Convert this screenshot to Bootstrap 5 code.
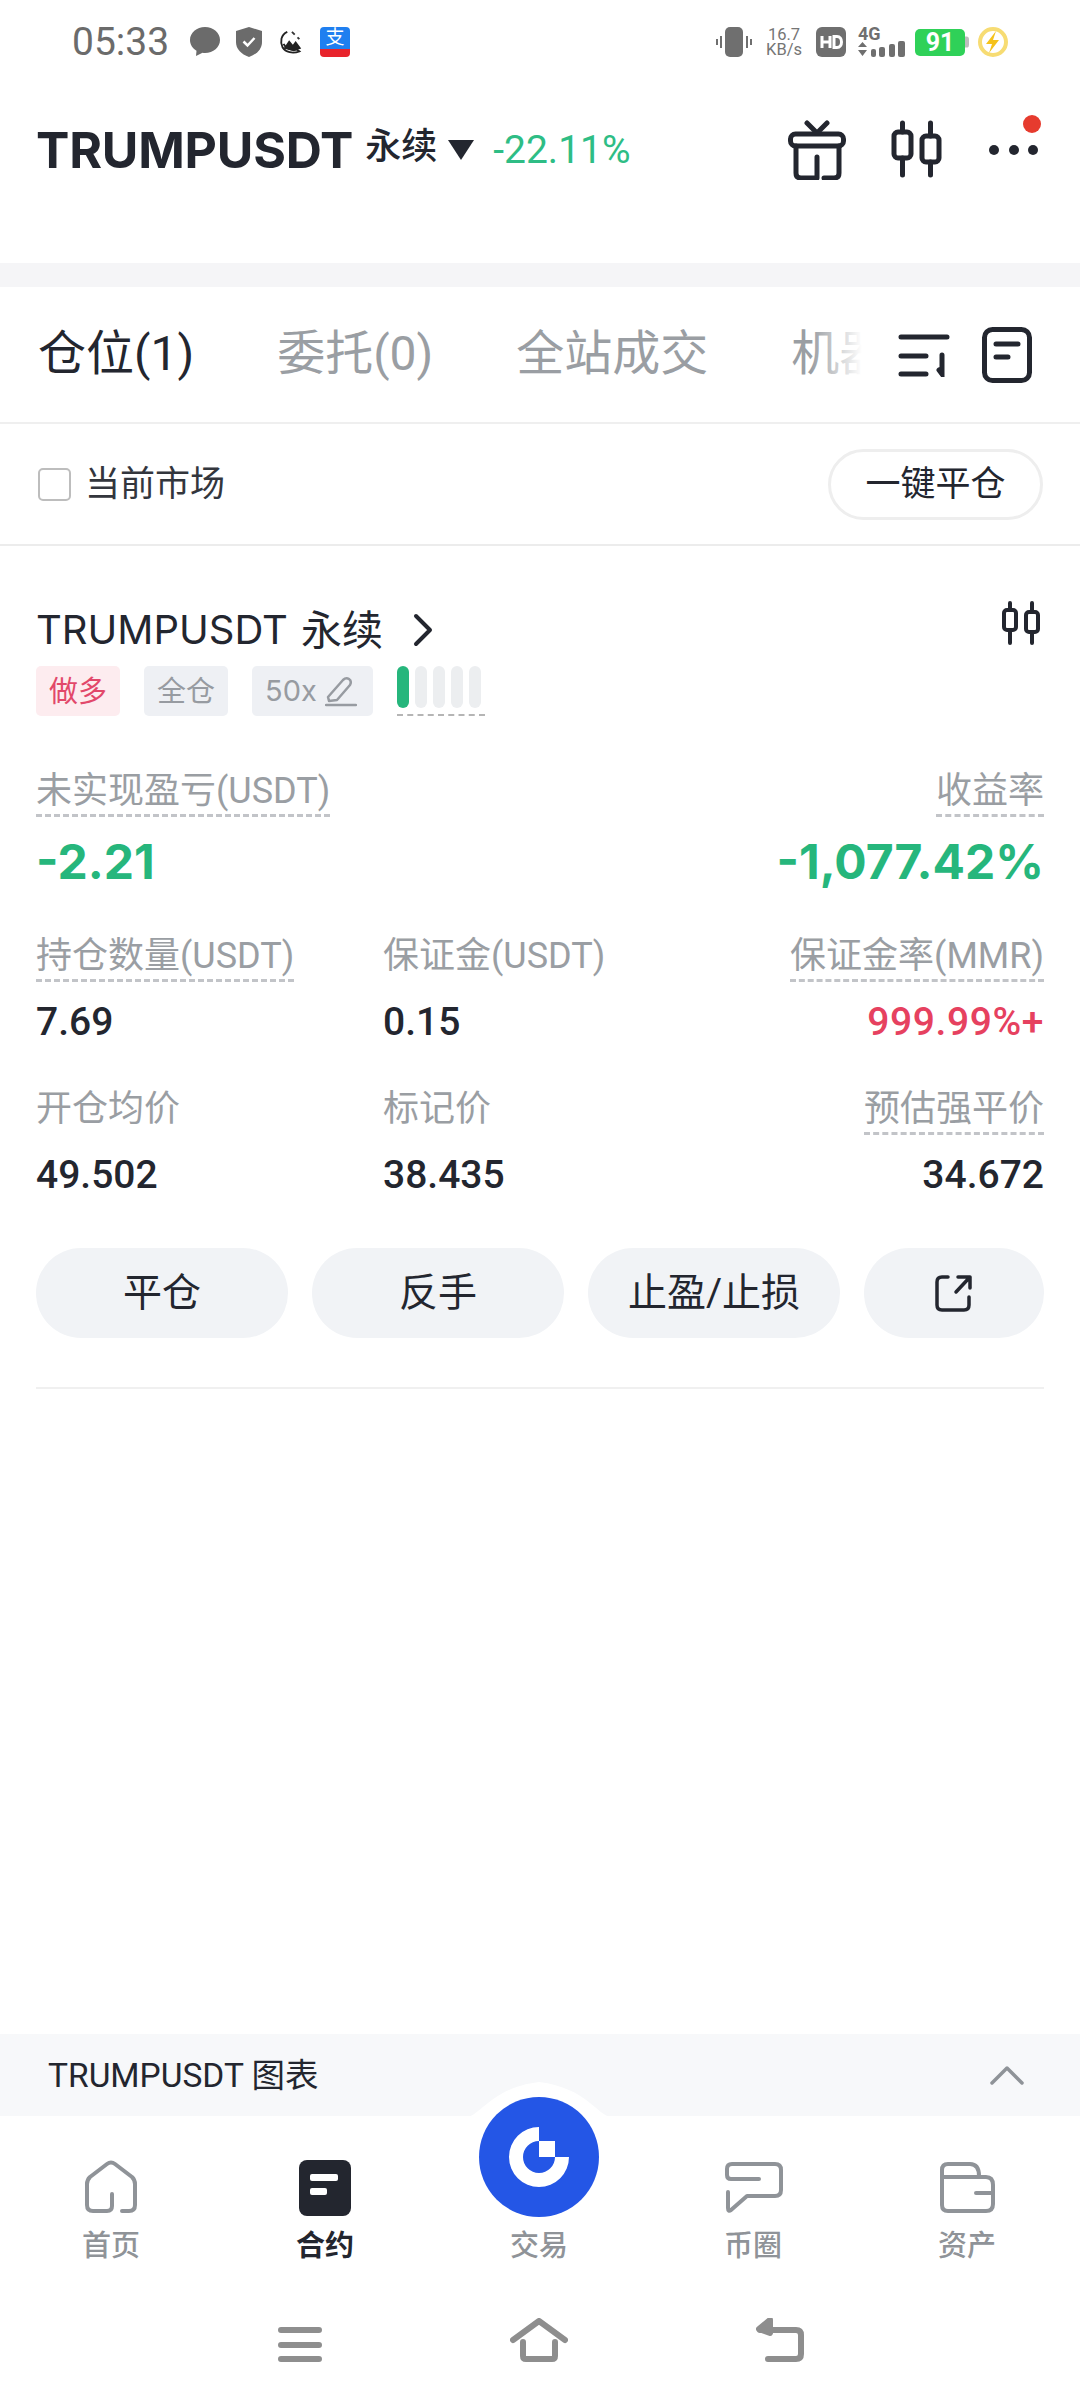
<!doctype html>
<html lang="zh">

<head>
  <meta charset="utf-8">
  <meta name="viewport" content="width=device-width, initial-scale=1">
  <title>TRUMPUSDT 仓位</title>
  <link href="https://cdn.jsdelivr.net/npm/bootstrap@5.3.5/dist/css/bootstrap.min.css" rel="stylesheet">
  <style>
    html, body { height: 100%; }
    body {
      font-family: Roboto, "Noto Sans CJK SC", sans-serif;
      color: #23262f;
      background: #fff;
      overflow: hidden;
    }
    svg { display: block; flex: none; }
    .phone { height: 2408px; }

    /* status bar */
    .status-bar { height: 87px; padding: 27px 71px 0 72px; }
    .status-time { font-size: 39px; line-height: 30px; color: #6b6b6b; margin-right: 21px; }
    .status-speed { font-size: 16.5px; line-height: 15px; color: #757575; text-align: center; margin: 0 14px 0 14px; }
    .status-4g { font-size: 18px; font-weight: 700; line-height: 14px; color: #6f6f6f; margin: 0 0 0 12px; }
    .status-batt { width: 50px; height: 27px; background: #2fd158; border-radius: 5px; color: #fff; font-size: 25px; font-weight: 700; line-height: 27px; text-align: center; margin-left: 10px; }
    .alipay { width: 30px; height: 30px; border-radius: 4px; overflow: hidden; }
    .alipay-top { height: 22px; background: #1f7ff0; color: #fff; font-size: 19px; line-height: 22px; text-align: center; }
    .alipay-low { height: 8px; background: #e8242c; }

    /* header */
    .head-bar { height: 176px; padding: 0 36px 50px; }
    .pair-name { font-family: Inter, sans-serif; font-size: 50px; font-weight: 700; line-height: 60px; letter-spacing: -.2px; margin-right: 12px; }
    .pair-kind { font-size: 36px; font-weight: 500; line-height: 50px; margin-bottom: 6px; margin-right: 11px; }
    .pair-tri { width: 0; height: 0; border-left: 13px solid transparent; border-right: 13px solid transparent; border-top: 20px solid #23262f; margin-right: 19px; }
    .pair-pct { font-size: 39px; color: #2ebd85; }
    .head-icons { gap: 44px; margin-right: -2px; }
    .dots-wrap { position: relative; width: 60px; height: 60px; margin-left: -1px; }
    .red-dot { position: absolute; width: 18px; height: 18px; border-radius: 50%; background: #e63b2e; right: 5px; top: -5px; }
    .grey-band { height: 24px; background: #f5f5f7; }

    /* tabs */
    .tab-row { height: 137px; border-bottom: 2px solid #efefef; padding: 0 48px 0 38px; }
    .tab-scroll { width: 833px; overflow: hidden; position: relative; white-space: nowrap; gap: 83px; font-size: 48px; color: #9a9ea3; margin-top: -2px; }
    .tab-scroll::after { content: ""; position: absolute; top: 0; bottom: 0; right: 0; width: 60px; background: linear-gradient(90deg, rgba(255, 255, 255, 0), #fff 85%); }
    .tab-on { color: #23262f; }
    .tab-icon-gap { margin-left: 32px; }

    /* filter */
    .filter-row { height: 122px; border-bottom: 2px solid #ececec; padding: 0 37px 0 38px; }
    .fake-check { width: 33px; height: 33px; border: 2px solid #bdbdbd; border-radius: 5px; margin-right: 14px; }
    .filter-text { font-size: 35px; color: #33363d; padding-top: 3px; }
    .close-all { width: 215px; height: 71px; border: 3px solid #eeeeee; border-radius: 36px; font-size: 35px; color: #23262f; padding: 2px 0 0; background: #fff; }

    /* position card */
    .pos-card { padding: 60px 36px 0; }
    .pos-title { font-size: 40px; line-height: 48px; font-family: Inter, "Noto Sans CJK SC", sans-serif; }
    .pos-kind { font-size: 41px; margin-left: 13px; }
    .pos-title svg { margin-left: 30px; }
    .pos-candle { margin-top: -5px; margin-right: 4px; }
    .tag-row { margin-top: 12px; height: 50px; gap: 24px; }
    .tag-item { height: 50px; border-radius: 5px; font-size: 29px; line-height: 52px; padding: 0 13px; background: #eef0f4; color: #979ba1; }
    .tag-lev { padding-right: 16px; font-family: Inter, sans-serif; }
    .tag-long { background: #fdecef; color: #e2486a; }
    .lev-bars { gap: 6px; height: 50px; border-bottom: 2px dashed #b5b5b5; padding-bottom: 8px; width: 88px; align-self: flex-start; }
    .lev-bars span { width: 12px; height: 42px; border-radius: 6px; background: #eceef0; }
    .lev-bars span.lev-on { background: #26b67c; }

    .metric-grid { display: grid; grid-template-columns: 347px 1fr auto; }
    .m-label { font-size: 36px; line-height: 45px; color: #9a9ea3; padding-top: 1px; }
    .m-tip { display: inline-block; border-bottom: 3px dashed #c2c4c8; }
    .m-plain { border-bottom: 3px solid transparent; display: inline-block; }
    .m-value { font-size: 39px; line-height: 46px; margin-top: 17px; color: #23262f; font-weight: 500; }
    .m-big { font-family: Inter, sans-serif; font-size: 48px; line-height: 56px; font-weight: 700; color: #26b67c; margin-top: 17px; }
    .m-red { color: #e6415f; letter-spacing: .6px; }
    .row-one { margin-top: 52px; }
    .row-two { margin-top: 43px; }
    .row-three { margin-top: 41px; }
    .act-row { margin-top: 50px; gap: 24px; }
    .act-btn { height: 90px; width: 252px; border-radius: 45px; background: #f1f3f6; border: 0; font-size: 39px; color: #23262f; padding: 0; }
    .act-btn.act-share { width: 180px; }
    .card-end { margin-top: 49px; height: 2px; background: #f0f0f0; }

    /* chart bar and tab bar */
    .chart-bar { height: 82px; background: #f7f8fa; padding: 0 56px 0 48px; font-size: 33.5px; margin-top: auto; }
    .chart-label { padding-top: 3px; }
    .tab-bar { position: relative; height: 292px; background: #fff; }
    .bump { position: absolute; left: 464px; top: -34px; }
    .trade-btn { position: absolute; left: 479px; top: -19px; }
    .nav-list { padding: 44px 4px 0; }
    .nav-item-x { width: 214px; font-size: 29px; line-height: 40px; color: #8f9398; font-weight: 500; }
    .nav-item-x svg { height: 56px; margin-bottom: 10px; }
    .nav-on { color: #23262f; font-weight: 700; }
    .sys-bar { position: absolute; left: 0; right: 0; top: 202px; padding: 0 0 0 278px; gap: 188px; }
  </style>
</head>

<body>
  <div class="phone d-flex flex-column">

    <div class="status-bar d-flex justify-content-between align-items-start">
      <div class="d-flex align-items-center">
        <span class="status-time">05:33</span>
        <svg width="30" height="30" viewBox="0 0 30 30"><path d="M15 0C6.700 0 0 5.800 0 13c0 4.500 2.600 8.400 6.500 10.700L6 29l6.500-3.300c.8.200 1.700.300 2.500.300 8.300 0 15-5.800 15-13S23.300 0 15 0z" fill="#6b6b6b"/></svg>
        <svg class="ms-3" width="26" height="30" viewBox="0 0 26 30"><path d="M13 0l13 4v11c0 7-5 12-13 15C5 27 0 22 0 15V4z" fill="#6b6b6b"/><path d="M7.500 14.500l4 4 7-7.500" fill="none" stroke="#fff" stroke-width="2.500"/></svg>
        <svg class="ms-3 me-3" width="26" height="28" viewBox="0 0 28 28"><path d="M10 3C3 6 2 14 5 20c3 5 11 7 18 4l-3-2c-6 1-12-1-14-6" fill="none" stroke="#222" stroke-width="2"/><path d="M6 21l6-9 4 5 3-4 6 8-8 3z" fill="#222"/><path d="M15 3l3 3M21 9l2 2" stroke="#333" stroke-width="2"/></svg>
        <div class="alipay">
          <div class="alipay-top">支</div>
          <div class="alipay-low"></div>
        </div>
      </div>
      <div class="d-flex align-items-center">
        <svg width="36" height="30" viewBox="0 0 36 30"><rect x="9" width="18" height="30" rx="5" fill="#6f6f6f"/><path d="M5 9v12M1 12v6M31 9v12M35 12v6" stroke="#6f6f6f" stroke-width="2"/></svg>
        <div class="status-speed">16.7<br>KB/s</div>
        <svg width="30" height="30" viewBox="0 0 30 30"><rect width="30" height="30" rx="6" fill="#6f6f6f"/><path d="M6 9v12M14 9v12M6 15h8" stroke="#fff" stroke-width="3"/><path d="M18 9.500h3c6 0 6 11 0 11h-3z" fill="none" stroke="#fff" stroke-width="3"/></svg>
        <div class="status-4g">4G
          <svg width="47" height="16" viewBox="0 0 47 16"><path d="M0 6l4.500-5L9 6zM0 9l4.500 6L9 9z" fill="#6f6f6f"/><rect x="13" y="8" width="5" height="8" rx="2" fill="#6f6f6f"/><rect x="21" y="6" width="6" height="10" rx="2" fill="#6f6f6f"/><rect x="31" y="3" width="6" height="13" rx="2" fill="#6f6f6f"/><rect x="40" y="0" width="7" height="16" rx="2" fill="#6f6f6f"/></svg>
        </div>
        <div class="status-batt">91</div>
        <svg width="4" height="14" viewBox="0 0 5 14"><path d="M0 0h2q3 0 3 4v6q0 4-3 4H0z" fill="#bdbdbd"/></svg>
        <svg class="ms-2" width="32" height="30" viewBox="0 0 32 30"><circle cx="16" cy="15" r="13" fill="none" stroke="#f7dc73" stroke-width="4"/><path d="M19 4L9 17h6l-3 9 10-13h-6z" fill="#f5c21b"/></svg>
      </div>
    </div>

    <div class="head-bar d-flex justify-content-between align-items-center">
      <div class="d-flex align-items-center">
        <span class="pair-name">TRUMPUSDT</span>
        <span class="pair-kind">永续</span>
        <span class="pair-tri"></span>
        <span class="pair-pct">-22.11%</span>
      </div>
      <div class="head-icons d-flex align-items-center">
        <svg width="60" height="60" viewBox="0 0 60 60" fill="none" stroke="#23262f" stroke-width="5" stroke-linecap="round" stroke-linejoin="round"><rect x="3.500" y="14" width="53" height="12" rx="5"/><path d="M20 3l10 10 10-10M9 26v27q0 5 5 5h16V37M37 58h10q5 0 5-5V26"/></svg>
        <svg width="52" height="60" viewBox="0 0 52 60" fill="none" stroke="#23262f" stroke-width="5" stroke-linecap="round" stroke-linejoin="round"><rect x="3" y="12" width="17" height="26" rx="4"/><rect x="31" y="16" width="17" height="26" rx="4"/><path d="M11.500 3v9M11.500 38v17M39.500 3v13M39.500 42v13"/></svg>
        <div class="dots-wrap">
          <span class="red-dot"></span>
          <svg width="60" height="60" viewBox="0 0 60 60" fill="#23262f"><circle cx="8" cy="30" r="5"/><circle cx="28" cy="30" r="5"/><circle cx="47" cy="30" r="5"/></svg>
        </div>
      </div>
    </div>

    <div class="grey-band"></div>

    <div class="tab-row d-flex align-items-center justify-content-between">
      <div class="tab-scroll d-flex">
        <span class="tab-on">仓位(1)</span>
        <span>委托(0)</span>
        <span>全站成交</span>
        <span>机器人</span>
      </div>
      <div class="d-flex align-items-center">
        <svg width="52" height="44" viewBox="0 0 52 44" fill="none" stroke="#23262f" stroke-width="5" stroke-linecap="round"><path d="M3 4h46M3 23h25M3 41h25M44 22v19l-3-4"/></svg>
        <svg class="tab-icon-gap" width="50" height="56" viewBox="0 0 50 56" fill="none" stroke="#23262f" stroke-width="5" stroke-linecap="round"><rect x="2.500" y="2.500" width="45" height="51" rx="8"/><path d="M14 17h22M14 30h12"/></svg>
      </div>
    </div>

    <div class="filter-row d-flex align-items-center justify-content-between">
      <div class="d-flex align-items-center">
        <span class="fake-check"></span>
        <span class="filter-text">当前市场</span>
      </div>
      <button type="button" class="btn close-all">一键平仓</button>
    </div>

    <div class="pos-card">
      <div class="d-flex justify-content-between align-items-start">
        <div class="pos-title d-flex align-items-center">
          <span>TRUMPUSDT</span><span class="pos-kind">永续</span>
          <svg width="20" height="34" viewBox="0 0 20 34" fill="none" stroke="#23262f" stroke-width="4" stroke-linecap="round" stroke-linejoin="round"><path d="M3 3l14 14L3 31"/></svg>
        </div>
        <svg class="pos-candle" width="38" height="44" viewBox="0 0 38 44" fill="none" stroke="#23262f" stroke-width="4" stroke-linecap="round" stroke-linejoin="round"><rect x="2" y="9" width="12" height="20" rx="3"/><rect x="24" y="11" width="12" height="20" rx="3"/><path d="M8 2v7M8 29v13M30 2v9M30 31v11"/></svg>
      </div>

      <div class="tag-row d-flex">
        <span class="tag-item tag-long">做多</span>
        <span class="tag-item">全仓</span>
        <span class="tag-item tag-lev d-flex align-items-center gap-2">50x
          <svg width="32" height="32" viewBox="0 0 32 32" fill="none" stroke="#979ba1" stroke-width="2.500" stroke-linecap="round" stroke-linejoin="round"><path d="M3 22L18 5q3-3 6-1t1 6L12 25l-8 1zM1 30h30"/></svg>
        </span>
        <div class="lev-bars d-flex">
          <span class="lev-on"></span><span></span><span></span><span></span><span></span>
        </div>
      </div>

      <div class="metric-grid row-one">
        <div><span class="m-label m-tip">未实现盈亏(USDT)</span></div>
        <div></div>
        <div class="text-end"><span class="m-label m-tip">收益率</span></div>
        <div class="m-big">-2.21</div>
        <div></div>
        <div class="m-big text-end">-1,077.42%</div>
      </div>

      <div class="metric-grid row-two">
        <div><span class="m-label m-tip">持仓数量(USDT)</span></div>
        <div><span class="m-label m-plain">保证金(USDT)</span></div>
        <div class="text-end"><span class="m-label m-tip">保证金率(MMR)</span></div>
        <div class="m-value">7.69</div>
        <div class="m-value">0.15</div>
        <div class="m-value m-red text-end">999.99%+</div>
      </div>

      <div class="metric-grid row-three">
        <div><span class="m-label m-plain">开仓均价</span></div>
        <div><span class="m-label m-plain">标记价</span></div>
        <div class="text-end"><span class="m-label m-tip">预估强平价</span></div>
        <div class="m-value">49.502</div>
        <div class="m-value">38.435</div>
        <div class="m-value text-end">34.672</div>
      </div>

      <div class="act-row d-flex">
        <button type="button" class="btn act-btn">平仓</button>
        <button type="button" class="btn act-btn">反手</button>
        <button type="button" class="btn act-btn">止盈/止损</button>
        <button type="button" class="btn act-btn act-share d-flex align-items-center justify-content-center">
          <svg width="40" height="38" viewBox="0 0 40 38" fill="none" stroke="#23262f" stroke-width="3.500" stroke-linecap="round" stroke-linejoin="round"><path d="M14 3H8Q3 3 3 8v23q0 5 5 5h22q5 0 5-5v-8M22 18L36 3M24 3h12v11"/></svg>
        </button>
      </div>
      <div class="card-end"></div>
    </div>

    <div class="chart-bar d-flex align-items-center justify-content-between">
      <span class="chart-label">TRUMPUSDT 图表</span>
      <svg width="34" height="20" viewBox="0 0 34 20" fill="none" stroke="#8f9398" stroke-width="3.500" stroke-linecap="round" stroke-linejoin="round"><path d="M2 18L17 3l15 15"/></svg>
    </div>

    <div class="tab-bar">
      <svg class="bump" width="150" height="36" viewBox="0 0 150 36"><path d="M0 36C18 34 26 6 75 0c49 6 57 34 75 36z" fill="#fff"/></svg>
      <svg class="trade-btn" width="120" height="120" viewBox="-60 -60 120 120"><circle r="60" fill="#2456e6"/><path d="M0-30A30 30 0 1 0 30 0H16V-16H0z" fill="#fff"/><path d="M0-16A16 16 0 1 0 16 0H0z" fill="#2456e6"/></svg>

      <div class="nav-list d-flex">
        <div class="nav-item-x d-flex flex-column align-items-center">
          <svg width="54" viewBox="0 0 54 56" fill="none" stroke="#8f9398" stroke-width="4" stroke-linecap="round" stroke-linejoin="round"><path d="M28 34v12q0 5-5 5H9q-6 0-6-6V24q0-4 3-7L23 4q4-3 8 0l17 13q3 3 3 7v21q0 6-6 6h-7"/></svg>
          <span>首页</span>
        </div>
        <div class="nav-item-x nav-on d-flex flex-column align-items-center">
          <svg width="52" viewBox="0 0 52 56"><rect width="52" height="56" rx="8" fill="#23262f"/><rect x="11" y="14" width="28" height="7" rx="2" fill="#fff"/><rect x="11" y="28" width="17" height="7" rx="2" fill="#fff"/></svg>
          <span>合约</span>
        </div>
        <div class="nav-item-x d-flex flex-column align-items-center">
          <svg width="54" viewBox="0 0 54 56"></svg>
          <span>交易</span>
        </div>
        <div class="nav-item-x d-flex flex-column align-items-center">
          <svg width="60" viewBox="0 0 60 56" fill="none" stroke="#8f9398" stroke-width="4" stroke-linecap="round" stroke-linejoin="round"><path d="M36 19H8q-4 0-4-4V9q0-5 5-5h43q6 0 6 6v20q0 6-6 6H24L8 50q-3 2-3-2V32"/></svg>
          <span>币圈</span>
        </div>
        <div class="nav-item-x d-flex flex-column align-items-center">
          <svg width="58" viewBox="0 0 58 56" fill="none" stroke="#8f9398" stroke-width="4" stroke-linecap="round" stroke-linejoin="round"><path d="M4 17h44q7 0 7 8v19q0 7-7 7H10q-6 0-6-6V10q0-6 6-6h22q9 0 9 12M38 33h17"/></svg>
          <span>资产</span>
        </div>
      </div>

      <div class="sys-bar d-flex align-items-end">
        <svg width="44" height="40" viewBox="0 0 44 40" fill="none" stroke="#8e8e8e" stroke-width="6" stroke-linecap="round"><path d="M3 8h38M3 23h38M3 37h38"/></svg>
        <svg width="58" height="44" viewBox="0 0 58 44" fill="none" stroke="#8e8e8e" stroke-width="6" stroke-linecap="round" stroke-linejoin="round"><path d="M3 22L29 3l26 19M13 24v14q0 3 3 3h26q3 0 3-3V24"/></svg>
        <svg width="48" height="44" viewBox="0 0 48 44" fill="none" stroke="#8e8e8e" stroke-width="6" stroke-linecap="round" stroke-linejoin="round"><path d="M4 12h36q5 0 5 5v19q0 5-5 5H12"/><path d="M14 2L3 11l11 4z" fill="#8e8e8e"/></svg>
      </div>
    </div>
  </div>

  <script src="https://cdn.jsdelivr.net/npm/bootstrap@5.3.5/dist/js/bootstrap.bundle.min.js"></script>
</body>

</html>
